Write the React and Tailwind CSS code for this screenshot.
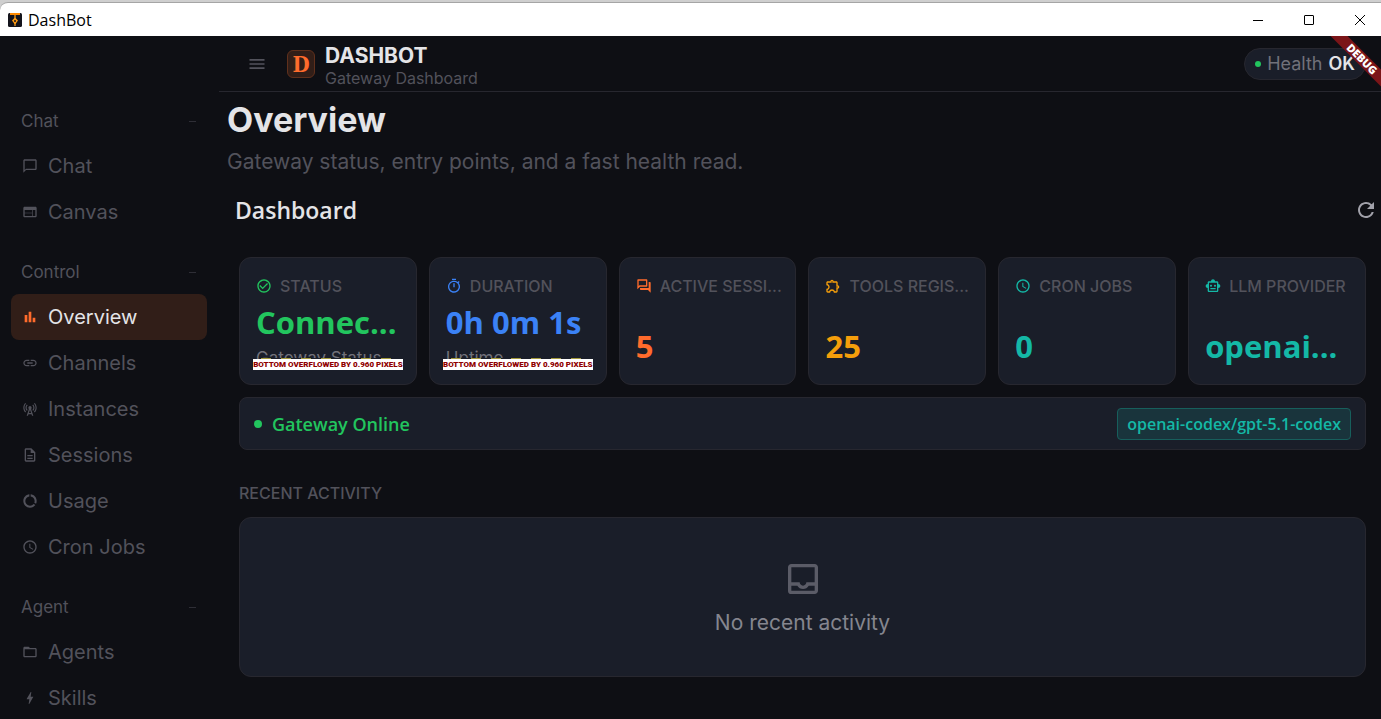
import React, { useState } from 'react'
import clsx from 'clsx'
import {
  MdBolt,
  MdCellTower,
  MdChatBubbleOutline,
  MdCheckCircleOutline,
  MdDataUsage,
  MdFolderOpen,
  MdLink,
  MdMenu,
  MdOutlineDescription,
  MdOutlineExtension,
  MdOutlineForum,
  MdOutlineInbox,
  MdOutlineSmartToy,
  MdOutlineTimer,
  MdRefresh,
  MdSchedule,
  MdWeb,
} from 'react-icons/md'

const BarsIcon = ({ className }) => (
  <svg viewBox="0 0 24 24" fill="currentColor" className={className}>
    <path d="M4 9h4v11H4zm12 4h4v7h-4zm-6-9h4v16h-4z" />
  </svg>
)

const sections = [
  {
    title: 'Chat',
    items: [
      { name: 'Chat', icon: MdChatBubbleOutline },
      { name: 'Canvas', icon: MdWeb },
    ],
  },
  {
    title: 'Control',
    items: [
      { name: 'Overview', icon: BarsIcon },
      { name: 'Channels', icon: MdLink },
      { name: 'Instances', icon: MdCellTower },
      { name: 'Sessions', icon: MdOutlineDescription },
      { name: 'Usage', icon: MdDataUsage },
      { name: 'Cron Jobs', icon: MdSchedule },
    ],
  },
  {
    title: 'Agent',
    items: [
      { name: 'Agents', icon: MdFolderOpen },
      { name: 'Skills', icon: MdBolt },
    ],
  },
]

const stats = [
  { label: 'STATUS', value: 'Connec...', sub: 'Gateway Status', icon: MdCheckCircleOutline, color: 'text-[#22c55e]' },
  { label: 'DURATION', value: '0h 0m 1s', sub: 'Uptime', icon: MdOutlineTimer, color: 'text-[#3b82f6]' },
  { label: 'ACTIVE SESSI...', value: '5', icon: MdOutlineForum, color: 'text-[#ff6b2c]' },
  { label: 'TOOLS REGIS...', value: '25', icon: MdOutlineExtension, color: 'text-[#f59e0b]' },
  { label: 'CRON JOBS', value: '0', icon: MdSchedule, color: 'text-[#14b8a6]' },
  { label: 'LLM PROVIDER', value: 'openai...', icon: MdOutlineSmartToy, color: 'text-[#14b8a6]' },
]

const TitleBar = () => (
  <div className="flex h-9 shrink-0 flex-col bg-[#cfcfcf] pt-[2px]">
    <div className="flex flex-1 items-center rounded-tl-lg border-t border-[#a5a5a5] bg-white pl-2 text-black">
      <svg viewBox="0 0 14 14" className="h-[14px] w-[14px]">
        <rect width="14" height="14" rx="1.5" fill="#14141c" />
        <path d="M2 0h10v2H2z" fill="#ff8a00" />
        <path d="M7 2v4M7 9v4" stroke="#ffa51f" strokeWidth="1.2" />
        <path d="M7 4.500l3 3L7.500 11h-1L4 7.500z" fill="#ff9a10" />
        <circle cx="7" cy="8" r="1" fill="#14141c" />
      </svg>
      <span className="ml-[6px] font-['Open_Sans',sans-serif] text-base leading-5">DashBot</span>
      <div className="ml-auto flex h-full items-center gap-[9px]">
        <button aria-label="Minimize" className="flex h-full w-[42px] items-center justify-center">
          <svg viewBox="0 0 10 10" className="h-[10px] w-[10px]"><path d="M0 5.500h10" stroke="currentColor" /></svg>
        </button>
        <button aria-label="Maximize" className="flex h-full w-[42px] items-center justify-center">
          <svg viewBox="0 0 10 10" className="h-[10px] w-[10px]"><rect x="0.500" y="0.500" width="9" height="9" rx="0.500" fill="none" stroke="currentColor" /></svg>
        </button>
        <button aria-label="Close" className="flex h-full w-[42px] items-center justify-center">
          <svg viewBox="0 0 10 10" className="h-[10px] w-[10px]"><path d="M0 0l10 10M10 0L0 10" stroke="currentColor" /></svg>
        </button>
      </div>
    </div>
  </div>
)

const Sidebar = ({ current, onSelect }) => (
  <nav className="w-[219px] shrink-0 overflow-hidden pl-[11px] pr-3 pt-12">
    {sections.map((section) => (
      <div key={section.title} className="pt-[15px]">
        <button className="flex h-11 w-full items-center justify-between pl-[10px] pr-[11px] pt-px text-[17px] text-[#52525b]">
          <span>{section.title}</span>
          <span className="h-px w-[7px] bg-[#2e2e36]"></span>
        </button>
        {section.items.map(({ name, icon: Icon }) => {
          const active = name === current
          return (
            <button
              key={name}
              onClick={() => onSelect(name)}
              className={clsx(
                'flex h-[46px] w-full items-center gap-[10px] rounded-lg pl-[11px] text-xl',
                active ? 'bg-[#311e18] text-[#e4e4e7]' : 'text-[#52525b]'
              )}
            >
              <Icon className={clsx('h-4 w-4', active && 'text-[#ff6b2c]')} />
              {name}
            </button>
          )
        })}
      </div>
    ))}
  </nav>
)

const Header = () => (
  <header className="flex h-14 shrink-0 items-center border-b border-[#27272f] pl-7 pr-[15px]">
    <button aria-label="Toggle menu" className="text-[#52525b]">
      <MdMenu className="h-5 w-5" />
    </button>
    <span className="ml-5 flex h-7 w-7 items-center justify-center rounded-md border border-[#60301c] bg-[#311e18] font-['DejaVu_Serif_Condensed','DejaVu_Serif',serif] text-[22px] font-bold leading-none text-[#ff6b2c]">
      D
    </span>
    <div className="ml-[10px] pt-1">
      <div className="text-[21px] font-bold leading-6 text-[#e4e4e7]">DASHBOT</div>
      <div className="text-base leading-5 text-[#52525b]">Gateway Dashboard</div>
    </div>
    <div className="ml-auto flex h-8 items-center rounded-full border border-[#27272f] bg-[#1a1e29] px-[10px] text-lg">
      <span className="h-[6px] w-[6px] rounded-full bg-[#22c55e]"></span>
      <span className="ml-[6px] text-[#71717a]">Health</span>
      <span className="ml-[6px] font-semibold text-[#e4e4e7]">OK</span>
    </div>
  </header>
)

const OverflowMark = () => (
  <div className="absolute inset-x-[13px] bottom-[14px]">
    <div className="mx-2 h-px bg-[repeating-linear-gradient(90deg,#a39a3c_0_10px,#1b1e29_10px_20px)]"></div>
    <div className="flex h-[11px] items-center justify-center overflow-hidden whitespace-nowrap bg-white font-['Roboto',sans-serif] text-[8px] font-black text-[#900000]">
      BOTTOM OVERFLOWED BY 0.960 PIXELS
    </div>
  </div>
)

const StatCard = ({ stat }) => {
  const Icon = stat.icon
  return (
    <div className="relative flex h-32 min-w-0 flex-col justify-between rounded-xl border border-[#27272f] bg-[#1a1e29] p-4">
      <div className="-mr-2 flex h-6 items-center gap-2">
        <Icon className={clsx('h-4 w-4 shrink-0', stat.color)} />
        <span className="truncate text-base font-medium text-[#52525b]">{stat.label}</span>
      </div>
      <div>
        <div className={clsx("truncate font-['Open_Sans',sans-serif] text-[31px] font-bold leading-[44px]", stat.color)}>
          {stat.value}
        </div>
        {stat.sub && <div className="h-6 text-[17px] leading-7 text-[#71717a]">{stat.sub}</div>}
      </div>
      {stat.sub && <OverflowMark />}
    </div>
  )
}

const App = () => {
  const [current, setCurrent] = useState('Overview')

  return (
    <div className="flex h-screen flex-col bg-[#0e0f14] font-['Inter',sans-serif]">
      <TitleBar />
      <div className="relative flex min-h-0 flex-1 overflow-hidden">
        <Sidebar current={current} onSelect={setCurrent} />
        <div className="flex min-w-0 flex-1 flex-col">
          <Header />
          <main className="flex-1 overflow-hidden px-2">
            <h1 className="pt-1 text-[34px] font-bold leading-[48px] text-[#e4e4e7]">Overview</h1>
            <p className="mt-[2px] text-[21px] leading-8 text-[#52525b]">Gateway status, entry points, and a fast health read.</p>

            <div className="mt-3 flex h-10 items-center justify-between pl-2">
              <h2 className="font-['Open_Sans',sans-serif] text-[23px] font-semibold text-[#e4e4e7]">Dashboard</h2>
              <button aria-label="Refresh" className="-mr-[5px] text-[#a1a1aa]">
                <MdRefresh className="h-6 w-6" />
              </button>
            </div>

            <div className="mt-[27px] pl-3 pr-[7px]">
              <div className="grid grid-cols-6 gap-3">
                {stats.map((stat) => <StatCard key={stat.label} stat={stat} />)}
              </div>

              <div className="mt-3 flex h-[53px] items-center rounded-lg border border-[#27272f] bg-[#1a1e29] px-[14px] font-['Open_Sans',sans-serif]">
                <span className="h-2 w-2 rounded-full bg-[#22c55e]"></span>
                <span className="ml-[10px] text-lg font-semibold text-[#22c55e]">Gateway Online</span>
                <span className="ml-auto flex h-8 items-center rounded border border-[#175f5c] bg-[#19343c] px-[9px] text-base font-semibold text-[#14b8a6]">
                  openai-codex/gpt-5.1-codex
                </span>
              </div>

              <h3 className="mt-[31px] text-base font-medium leading-6 text-[#52525b]">RECENT ACTIVITY</h3>
              <div className="mt-3 flex h-40 flex-col items-center justify-center rounded-xl border border-[#27272f] bg-[#1a1e29] pt-1">
                <MdOutlineInbox className="h-10 w-10 text-[#5b5c67]" />
                <p className="mt-2 text-[21px] leading-8 text-[#85868f]">No recent activity</p>
              </div>
            </div>
          </main>
        </div>

        <div className="absolute right-0 top-0 h-16 w-16 overflow-hidden">
          <div className="absolute -right-[31px] top-[17px] flex h-3 w-[100px] rotate-45 items-center justify-center bg-[#7b1518] font-['Open_Sans',sans-serif] text-[11px] font-extrabold leading-3 text-white">
            DEBUG
          </div>
        </div>
      </div>
    </div>
  )
}

export default App
